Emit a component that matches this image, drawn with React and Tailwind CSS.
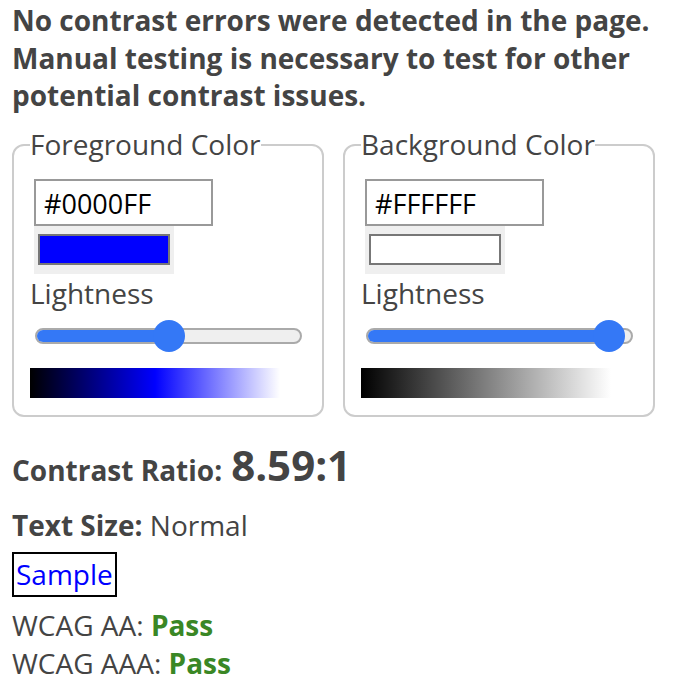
import React from 'react';

// thumb is the distance in px from the track's left edge to the thumb's centre
const ColorField = ({ legend, hex, swatch, thumb, gradient }) => (
  <fieldset className="border-2 border-[#cccccc] rounded-xl px-4 pb-[17px] pt-0 w-[312px]">
    <legend className="px-0 pb-[3px] text-[28px] leading-[38px] text-[#444]">{legend}</legend>
    <div className="mt-[13px] ml-[4px] w-[179px] h-[47px] border-2 border-[#999] pl-[8px] pt-[9px] text-[27px] leading-[27px] text-black">
      {hex}
    </div>
    <div className="ml-[4px] w-[140px] h-[48px] bg-[#efefef] flex items-center justify-center">
      <div className={`w-[132px] h-[31px] border-2 border-[#777] ${swatch}`}></div>
    </div>
    <div className="text-[28px] leading-[38px] text-[#444]">Lightness</div>
    <div className="relative mt-[8px] ml-[5px] h-[32px] w-[267px] flex items-center">
      <div className="w-full h-[16px] rounded-full bg-[#efefef] border-2 border-[#aaa] overflow-hidden">
        <div className="h-full bg-[#3478f6]" style={{ width: thumb }}></div>
      </div>
      <div className="absolute top-0 w-[32px] h-[32px] rounded-full bg-[#3478f6]" style={{ left: thumb - 16 }}></div>
    </div>
    <div className={`mt-[16px] w-[250px] h-[30px] ${gradient}`}></div>
  </fieldset>
);

const App = () => {
  return (
    <div className="min-h-screen bg-white px-3 pt-[2px] text-[#444]" style={{ fontFamily: '"Open Sans", sans-serif' }}>
      <p className="text-[28px] leading-[37.5px] font-bold">
        No contrast errors were detected in the page. Manual testing is necessary to test for other potential contrast issues.
      </p>

      <div className="flex gap-[19px] mt-[10px]">
        <ColorField
          legend="Foreground Color"
          hex="#0000FF"
          swatch="bg-[#0000ff]"
          thumb={134}
          gradient="bg-linear-to-r/srgb from-black via-[#0000ff] to-white"
        />
        <ColorField
          legend="Background Color"
          hex="#FFFFFF"
          swatch="bg-white"
          thumb={243}
          gradient="bg-linear-to-r/srgb from-black to-white"
        />
      </div>

      <div className="mt-[23px] flex items-baseline gap-[9px]">
        <span className="text-[28px] leading-[38px] font-bold">Contrast Ratio:</span>
        <span className="text-[42px] leading-[50px] font-bold">8.59:1</span>
      </div>

      <div className="mt-[16px] text-[28px] leading-[38px]">
        <span className="font-bold">Text Size:</span> Normal
      </div>

      <div className="mt-[8px] inline-block border-2 border-black px-[2px] text-[28px] leading-[41px] text-[#0000ff]">
        Sample
      </div>

      <div className="mt-[9px] text-[28px] leading-[38px]">
        WCAG AA: <span className="font-bold text-[#3a8725]">Pass</span>
      </div>
      <div className="text-[28px] leading-[38px]">
        WCAG AAA: <span className="font-bold text-[#3a8725]">Pass</span>
      </div>
    </div>
  );
};

export default App;
